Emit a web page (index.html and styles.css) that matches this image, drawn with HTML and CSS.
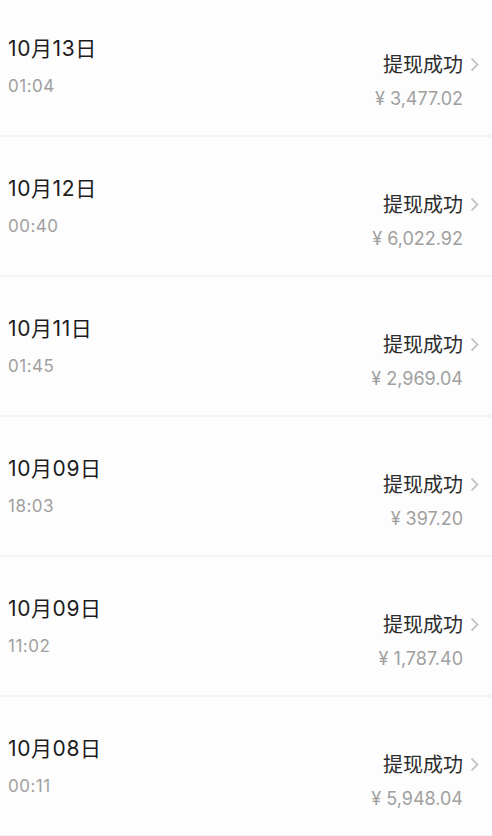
FILE: index.html
```html
<!DOCTYPE html>
<html lang="zh-CN">
<head>
	<meta charset="UTF-8">
	<title>提现记录</title>
	<link rel="stylesheet" href="styles.css">
</head>
<body>

	<ul class="record-list">
		<li class="record">
			<div class="record-left">
				<div class="record-date">10月13日</div>
				<div class="record-time">01:04</div>
			</div>
			<div class="record-right">
				<div class="record-texts">
					<div class="record-status">提现成功</div>
					<div class="record-amount">¥ 3,477.02</div>
				</div>
				<svg class="arrow" width="9" height="15" viewBox="0 0 9 15"><path d="M1.5 1.5l6 6-6 6" fill="none" stroke="#c4c4c8" stroke-width="1.8"/></svg>
			</div>
		</li>
		<li class="record">
			<div class="record-left">
				<div class="record-date">10月12日</div>
				<div class="record-time">00:40</div>
			</div>
			<div class="record-right">
				<div class="record-texts">
					<div class="record-status">提现成功</div>
					<div class="record-amount">¥ 6,022.92</div>
				</div>
				<svg class="arrow" width="9" height="15" viewBox="0 0 9 15"><path d="M1.5 1.5l6 6-6 6" fill="none" stroke="#c4c4c8" stroke-width="1.8"/></svg>
			</div>
		</li>
		<li class="record">
			<div class="record-left">
				<div class="record-date">10月11日</div>
				<div class="record-time">01:45</div>
			</div>
			<div class="record-right">
				<div class="record-texts">
					<div class="record-status">提现成功</div>
					<div class="record-amount">¥ 2,969.04</div>
				</div>
				<svg class="arrow" width="9" height="15" viewBox="0 0 9 15"><path d="M1.5 1.5l6 6-6 6" fill="none" stroke="#c4c4c8" stroke-width="1.8"/></svg>
			</div>
		</li>
		<li class="record">
			<div class="record-left">
				<div class="record-date">10月09日</div>
				<div class="record-time">18:03</div>
			</div>
			<div class="record-right">
				<div class="record-texts">
					<div class="record-status">提现成功</div>
					<div class="record-amount">¥ 397.20</div>
				</div>
				<svg class="arrow" width="9" height="15" viewBox="0 0 9 15"><path d="M1.5 1.5l6 6-6 6" fill="none" stroke="#c4c4c8" stroke-width="1.8"/></svg>
			</div>
		</li>
		<li class="record">
			<div class="record-left">
				<div class="record-date">10月09日</div>
				<div class="record-time">11:02</div>
			</div>
			<div class="record-right">
				<div class="record-texts">
					<div class="record-status">提现成功</div>
					<div class="record-amount">¥ 1,787.40</div>
				</div>
				<svg class="arrow" width="9" height="15" viewBox="0 0 9 15"><path d="M1.5 1.5l6 6-6 6" fill="none" stroke="#c4c4c8" stroke-width="1.8"/></svg>
			</div>
		</li>
		<li class="record">
			<div class="record-left">
				<div class="record-date">10月08日</div>
				<div class="record-time">00:11</div>
			</div>
			<div class="record-right">
				<div class="record-texts">
					<div class="record-status">提现成功</div>
					<div class="record-amount">¥ 5,948.04</div>
				</div>
				<svg class="arrow" width="9" height="15" viewBox="0 0 9 15"><path d="M1.5 1.5l6 6-6 6" fill="none" stroke="#c4c4c8" stroke-width="1.8"/></svg>
			</div>
		</li>
	</ul>

</body>
</html>
```

FILE: styles.css
```css
body{
	margin: 0;
	background-color: #fdfdfd;
	font-family: Inter, "Noto Sans CJK SC", sans-serif;
	overflow: hidden;
}
ul{
	list-style: none;
	margin: 0;
	padding: 0;
}
.record-list{
	margin-top: -3px;
}
.record{
	display: flex;
	justify-content: space-between;
	height: 138px;
	padding: 0 13px 0 8px;
	border-bottom: 2px solid #f3f2f5;
}
.record-left{
	padding-top: 40px;
}
.record-date{
	font-size: 21px;
	line-height: 24px;
	letter-spacing: 0.6px;
	color: #1c1c1c;
}
.record-time{
	margin-top: 15px;
	font-size: 17px;
	line-height: 20px;
	letter-spacing: 0.5px;
	color: #a0a0a0;
}
.record-right{
	display: flex;
	align-items: flex-start;
	padding-top: 55px;
}
.record-texts{
	text-align: right;
}
.record-status{
	font-size: 20px;
	line-height: 24px;
	color: #2c2c2c;
	font-family: "Noto Sans CJK SC", sans-serif;
}
.record-amount{
	margin-top: 12px;
	font-size: 18px;
	line-height: 22px;
	color: #a0a0a0;
}
.arrow{
	margin: 5px 0 0 7px;
}
```
